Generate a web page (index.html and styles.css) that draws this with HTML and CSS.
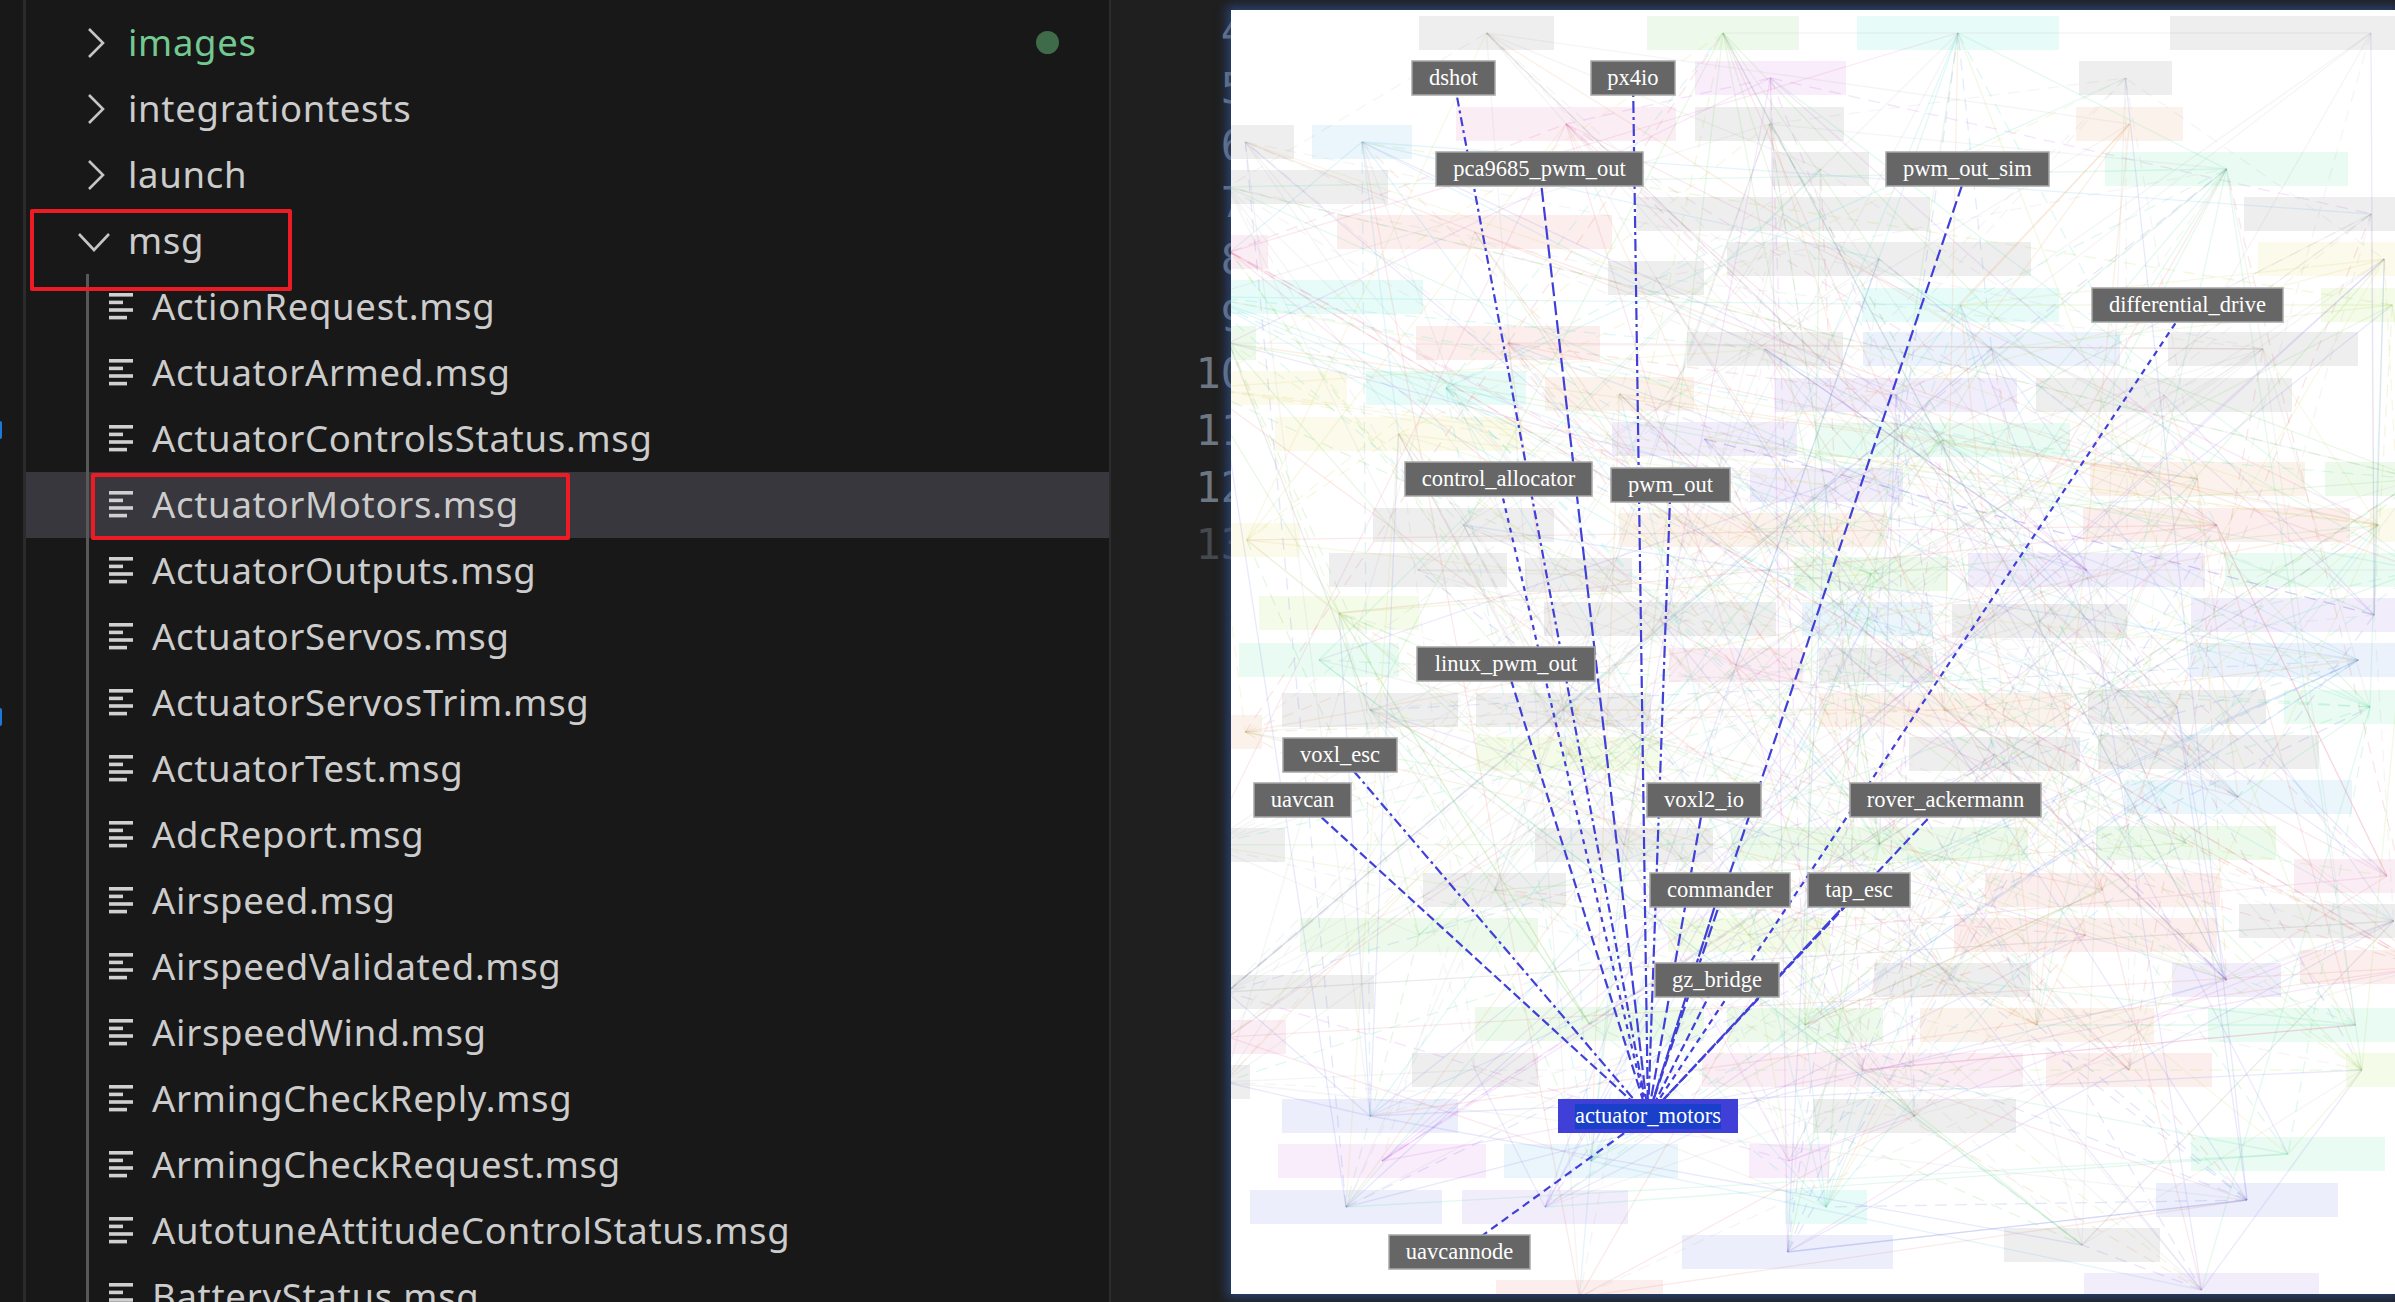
FILE: index.html
```html
<!DOCTYPE html>
<html lang="en">
    <head>
        <meta charset="utf-8">
        <link rel="stylesheet" href="styles.css">
    </head>
    <body>
        <svg class="defs">
            <symbol id="lines" viewBox="0 0 24 27">
                <rect x="0" y="0" width="24" height="3.6"/>
                <rect x="0" y="7.6" width="14" height="3.6"/>
                <rect x="0" y="15.2" width="24" height="3.6"/>
                <rect x="0" y="22.8" width="18" height="3.6"/>
            </symbol>
            <symbol id="right" viewBox="0 0 18 30">
                <polyline points="2,1 16,15 2,29"/>
            </symbol>
            <symbol id="down" viewBox="0 0 32 20">
                <polyline points="1,2 16,18 31,2"/>
            </symbol>
        </svg>
        <div class="page">
            <div class="sidebar">
                <i class="mark mark-a"></i>
                <i class="mark mark-b"></i>
                <div class="tree">
                    <div class="row folder added">
                        <svg class="chev"><use href="#right"/></svg><span>images</span><b class="dot"></b>
                    </div>
                    <div class="row folder">
                        <svg class="chev"><use href="#right"/></svg><span>integrationtests</span>
                    </div>
                    <div class="row folder">
                        <svg class="chev"><use href="#right"/></svg><span>launch</span>
                    </div>
                    <div class="row folder open">
                        <svg class="chev-down"><use href="#down"/></svg><span>msg</span>
                        <i class="redbox redbox-msg"></i>
                    </div>
                    <div class="children">
                        <div class="row file"><svg class="lines"><use href="#lines"/></svg><span>ActionRequest.msg</span></div>
                        <div class="row file"><svg class="lines"><use href="#lines"/></svg><span>ActuatorArmed.msg</span></div>
                        <div class="row file"><svg class="lines"><use href="#lines"/></svg><span>ActuatorControlsStatus.msg</span></div>
                        <div class="row file current"><svg class="lines"><use href="#lines"/></svg><span>ActuatorMotors.msg</span><i class="redbox redbox-file"></i></div>
                        <div class="row file"><svg class="lines"><use href="#lines"/></svg><span>ActuatorOutputs.msg</span></div>
                        <div class="row file"><svg class="lines"><use href="#lines"/></svg><span>ActuatorServos.msg</span></div>
                        <div class="row file"><svg class="lines"><use href="#lines"/></svg><span>ActuatorServosTrim.msg</span></div>
                        <div class="row file"><svg class="lines"><use href="#lines"/></svg><span>ActuatorTest.msg</span></div>
                        <div class="row file"><svg class="lines"><use href="#lines"/></svg><span>AdcReport.msg</span></div>
                        <div class="row file"><svg class="lines"><use href="#lines"/></svg><span>Airspeed.msg</span></div>
                        <div class="row file"><svg class="lines"><use href="#lines"/></svg><span>AirspeedValidated.msg</span></div>
                        <div class="row file"><svg class="lines"><use href="#lines"/></svg><span>AirspeedWind.msg</span></div>
                        <div class="row file"><svg class="lines"><use href="#lines"/></svg><span>ArmingCheckReply.msg</span></div>
                        <div class="row file"><svg class="lines"><use href="#lines"/></svg><span>ArmingCheckRequest.msg</span></div>
                        <div class="row file"><svg class="lines"><use href="#lines"/></svg><span>AutotuneAttitudeControlStatus.msg</span></div>
                        <div class="row file"><svg class="lines"><use href="#lines"/></svg><span>BatteryStatus.msg</span></div>
                        <i class="guide"></i>
                    </div>
                </div>
            </div>
            <div class="editor">
                <div class="gutter">
                    <div>4</div>
                    <div>5</div>
                    <div>6</div>
                    <div>7</div>
                    <div>8</div>
                    <div>9</div>
                    <div>10</div>
                    <div>11</div>
                    <div>12</div>
                    <div class="dim">13</div>
                </div>
                <div class="panel">
                    <svg id="graph" viewBox="1231 10 1164 1284"></svg>
                </div>
            </div>
        </div>
        <script src="graph.js"></script>
    </body>
</html>
```

FILE: styles.css
```css
* {
    margin: 0;
    padding: 0;
    box-sizing: border-box;
}
html, body {
    width: 100%;
    height: 100%;
    overflow: hidden;
    background-color: #1f1f1f;
}
.defs {
    display: none;
}
.page {
    display: flex;
    height: 1302px;
}

/* explorer */
.sidebar {
    position: relative;
    width: 1111px;
    flex: none;
    overflow: hidden;
    padding-left: 23px;
    background-color: #181818;
    border-right: 2px solid #2b2b2b;
}
.tree {
    position: relative;
    height: 100%;
    padding-top: 10px;
    border-left: 3px solid #2b2b2b;
    font-family: "Noto Sans", sans-serif;
    font-size: 36.5px;
    letter-spacing: 0.7px;
    color: #cccccc;
}
.row {
    position: relative;
    display: flex;
    align-items: center;
    height: 66px;
    white-space: nowrap;
}
.folder {
    padding-left: 102px;
}
.file {
    padding-left: 126px;
}
.row span {
    line-height: 66px;
    margin-top: -2px;
}
.current {
    background-color: #37373d;
}
.added {
    color: #73c991;
}
.dot {
    position: absolute;
    left: 1010px;
    top: 21px;
    width: 23px;
    height: 23px;
    border-radius: 50%;
    background-color: #3f6b4a;
}
.chev {
    position: absolute;
    left: 61px;
    top: 18px;
    width: 18px;
    height: 30px;
    fill: none;
    stroke: #c5c5c5;
    stroke-width: 2.6;
}
.chev-down {
    position: absolute;
    left: 52px;
    top: 24px;
    width: 32px;
    height: 20px;
    fill: none;
    stroke: #c5c5c5;
    stroke-width: 2.6;
}
.lines {
    position: absolute;
    left: 83px;
    top: 19px;
    width: 24px;
    height: 27px;
    fill: #d0d0d0;
}
.children {
    position: relative;
}
.guide {
    position: absolute;
    left: 60px;
    top: 0;
    bottom: 0;
    width: 3px;
    background-color: #585858;
}
.redbox {
    position: absolute;
    border: 4px solid #ed1c24;
    border-radius: 2px;
    z-index: 2;
}
.redbox-msg {
    left: 4px;
    top: 1px;
    width: 262px;
    height: 82px;
}
.redbox-file {
    left: 65px;
    top: 1px;
    width: 479px;
    height: 67px;
}
.mark {
    position: absolute;
    left: 0;
    width: 2px;
    height: 18px;
    border-radius: 0 3px 3px 0;
    background-color: #1e78d8;
}
.mark-a {
    top: 421px;
}
.mark-b {
    top: 708px;
}

/* code behind the floating graph */
.editor {
    position: relative;
    flex: 1;
    overflow: hidden;
}
.gutter {
    width: 135px;
    padding-top: 3px;
    font-family: "DejaVu Sans Mono", monospace;
    font-size: 42px;
    line-height: 57px;
    text-align: right;
    color: #6e7681;
}
.gutter .dim {
    color: #45484d;
}
.panel {
    position: absolute;
    left: 120px;
    right: 0;
    top: 10px;
    height: 1284px;
    background-color: #fff;
    box-shadow: 0 0 10px 4px rgba(50, 90, 170, 0.6);
}
#graph {
    display: block;
    width: 100%;
    height: 100%;
}

/* graph colours */
.c-grey { color: #6b6b6b; }
.c-blue { color: #4d8fe0; }
.c-sky { color: #45b0e0; }
.c-teal { color: #30d8c8; }
.c-mint { color: #40d890; }
.c-green { color: #60d050; }
.c-lime { color: #a0d840; }
.c-yellow { color: #d8d050; }
.c-orange { color: #e09850; }
.c-red { color: #e06a60; }
.c-pink { color: #e060a0; }
.c-magenta { color: #c858e0; }
.c-purple { color: #8060e0; }
.c-indigo { color: #5a6ce0; }

.faded rect {
    fill: currentColor;
    fill-opacity: 0.115;
}
.faded line {
    stroke: currentColor;
    stroke-opacity: 0.14;
    stroke-width: 1.3;
}
.faded line.dashed {
    stroke-dasharray: 12 8;
    stroke-opacity: 0.16;
}
.faded line.c-grey {
    stroke-opacity: 0.07;
}
.edge {
    stroke: #4040d8;
    stroke-width: 2.2;
}
.node rect {
    fill: #666;
    stroke: #a8a8a8;
    stroke-width: 1.5;
}
.node text {
    font-family: "Liberation Serif", serif;
    font-size: 22.5px;
    fill: #fff;
    text-anchor: middle;
}
.node.active rect {
    fill: #4040d8;
    stroke: none;
}
.node.active .hl {
    fill: #1a3fc8;
}
```

FILE: graph.js
```js
// x1, x2, top, colour of the nodes that are faded out
var faded = [
    [1419,1554,16,'grey'],[1647,1799,16,'green'],[1857,2059,16,'teal'],[2170,2395,16,'grey'],
    [2079,2172,61,'grey'],[1695,1846,61,'magenta'],
    [1456,1676,107,'pink'],[1695,1844,107,'grey'],[2076,2183,107,'orange'],
    [1231,1294,125,'grey'],[1312,1412,125,'sky'],
    [1772,1869,152,'grey'],[2105,2348,152,'mint'],
    [1231,1388,170,'grey'],[1636,1930,197,'grey'],[2244,2395,197,'grey'],
    [1337,1612,215,'red'],[1231,1268,235,'pink'],[1727,2031,242,'grey'],[2258,2395,242,'yellow'],
    [1608,1704,261,'grey'],[1231,1423,280,'teal'],[1862,2059,288,'teal'],[2321,2395,288,'lime'],
    [1416,1600,326,'red'],[1231,1256,326,'green'],[1687,1843,332,'grey'],[1863,2120,332,'blue'],[2168,2358,332,'grey'],
    [1231,1347,371,'yellow'],[1366,1526,371,'teal'],[1545,1694,377,'orange'],[1775,2017,378,'purple'],[2036,2292,378,'grey'],
    [1275,1522,417,'yellow'],[1612,1797,422,'purple'],[1816,2070,423,'mint'],
    [2090,2305,462,'orange'],[2325,2395,462,'green'],[1750,1903,468,'purple'],
    [1373,1554,508,'grey'],[2083,2350,508,'red'],[2370,2395,508,'yellow'],[1619,1887,513,'orange'],
    [1231,1300,523,'yellow'],[1329,1507,553,'grey'],[1968,2205,553,'purple'],[2225,2395,553,'mint'],
    [1525,1632,558,'grey'],[1794,1948,557,'green'],
    [1259,1419,596,'lime'],[2191,2395,598,'purple'],[1544,1776,602,'grey'],[1802,1933,602,'sky'],[1952,2127,604,'grey'],
    [1239,1399,643,'mint'],[2190,2395,643,'blue'],[1669,1803,648,'pink'],[1819,1933,648,'grey'],
    [2088,2266,690,'grey'],[2284,2395,690,'mint'],[1282,1458,693,'grey'],[1476,1651,693,'grey'],[1819,2069,693,'orange'],
    [1231,1262,715,'orange'],[2098,2319,735,'grey'],[1476,1660,737,'lime'],[1909,2080,737,'grey'],
    [2124,2352,780,'sky'],[2096,2276,826,'green'],[1731,2028,827,'green'],[1231,1285,828,'grey'],[1535,1713,828,'grey'],
    [2294,2395,859,'pink'],[1423,1566,873,'grey'],[1985,2220,873,'red'],
    [2239,2395,904,'grey'],[1300,1538,918,'green'],[1668,1830,918,'lime'],[1954,2217,918,'red'],
    [2300,2395,950,'red'],[1874,2030,963,'grey'],[2172,2281,963,'purple'],[1231,1374,975,'grey'],
    [1475,1704,1007,'green'],[1727,1883,1008,'green'],[1920,2154,1008,'orange'],[2208,2395,1008,'mint'],
    [1231,1286,1020,'pink'],[1412,1538,1053,'grey'],[1702,2023,1053,'pink'],[2046,2212,1053,'red'],[2346,2395,1053,'lime'],
    [1231,1250,1065,'grey'],[1282,1458,1099,'indigo'],[1813,2016,1099,'grey'],
    [2191,2385,1137,'mint'],[1278,1486,1144,'magenta'],[1504,1678,1144,'sky'],[1749,1829,1144,'magenta'],
    [2156,2338,1183,'indigo'],[1250,1442,1190,'indigo'],[1462,1628,1190,'purple'],[1785,1867,1190,'teal'],
    [2004,2160,1228,'grey'],[1682,1893,1235,'indigo'],[2084,2319,1273,'purple'],[1496,1663,1280,'red']
];

// x1, x2, top, name, dash pattern of the edge into actuator_motors
var nodes = [
    [1412,1495,61,'dshot','9 4 3 4'],
    [1591,1675,61,'px4io','12 4 3 4'],
    [1436,1643,152,'pca9685_pwm_out','14 5'],
    [1886,2049,152,'pwm_out_sim','12 5'],
    [2092,2283,288,'differential_drive','6 5'],
    [1405,1592,462,'control_allocator','5 5'],
    [1611,1730,468,'pwm_out','12 4 3 4'],
    [1417,1595,647,'linux_pwm_out','10 5'],
    [1283,1397,738,'voxl_esc','10 4 3 4'],
    [1254,1351,783,'uavcan','9 4'],
    [1647,1761,783,'voxl2_io','12 5'],
    [1850,2041,783,'rover_ackermann','9 4'],
    [1650,1790,873,'commander','16 2'],
    [1808,1910,873,'tap_esc','12 2'],
    [1655,1779,963,'gz_bridge','8 4'],
    [1389,1530,1235,'uavcannode','8 5']
];

var NS = 'http://www.w3.org/2000/svg';
var H = 34;
var svg = document.querySelector('#graph');
var seed = 20240611;

function rnd() {
    seed = (seed * 1664525 + 1013904223) % 4294967296;
    return seed / 4294967296;
}

function el(name, attrs, parent) {
    var e = document.createElementNS(NS, name);
    for (var k in attrs) {
        e.setAttribute(k, attrs[k]);
    }
    parent.appendChild(e);
    return e;
}

// nodes cut by the panel edge have their centre outside it
function centreX(f) {
    if (f[0] == 1231) {
        return f[0] - 40 + rnd() * 60;
    }
    if (f[1] == 2395) {
        return f[1] + 40 - rnd() * 120;
    }
    return (f[0] + f[1]) / 2;
}

var back = el('g', {'class': 'faded'}, svg);

faded.forEach(function (f) {
    el('rect', {
        x: f[0], y: f[2], width: f[1] - f[0], height: H, 'class': 'c-' + f[3]
    }, back);
    f.cx = centreX(f);
});

// every faded node gets a few thin lines running out of its centre
faded.forEach(function (f) {
    var count = 3 + Math.floor(rnd() * 6);
    for (var i = 0; i < count; i++) {
        var t = faded[Math.floor(rnd() * faded.length)];
        el('line', {
            x1: f.cx, y1: f[2] + H / 2, x2: t.cx, y2: t[2] + H / 2,
            'class': 'c-' + f[3] + (rnd() < 0.35 ? ' dashed' : '')
        }, back);
    }
});

nodes.forEach(function (n) {
    el('line', {
        x1: (n[0] + n[1]) / 2, y1: n[2] + H / 2, x2: 1648, y2: 1116,
        'class': 'edge', 'stroke-dasharray': n[4]
    }, svg);
});

function label(n, active) {
    var g = el('g', {'class': active ? 'node active' : 'node'}, svg);
    el('rect', {x: n[0], y: n[2], width: n[1] - n[0], height: H}, g);
    if (active) {
        el('rect', {'class': 'hl', x: n[0] + 17, y: n[2] + 5, width: n[1] - n[0] - 34, height: 25}, g);
    }
    var t = el('text', {x: (n[0] + n[1]) / 2, y: n[2] + 24}, g);
    t.textContent = n[3];
}

nodes.forEach(function (n) {
    label(n, false);
});
label([1558,1738,1099,'actuator_motors'], true);
```
